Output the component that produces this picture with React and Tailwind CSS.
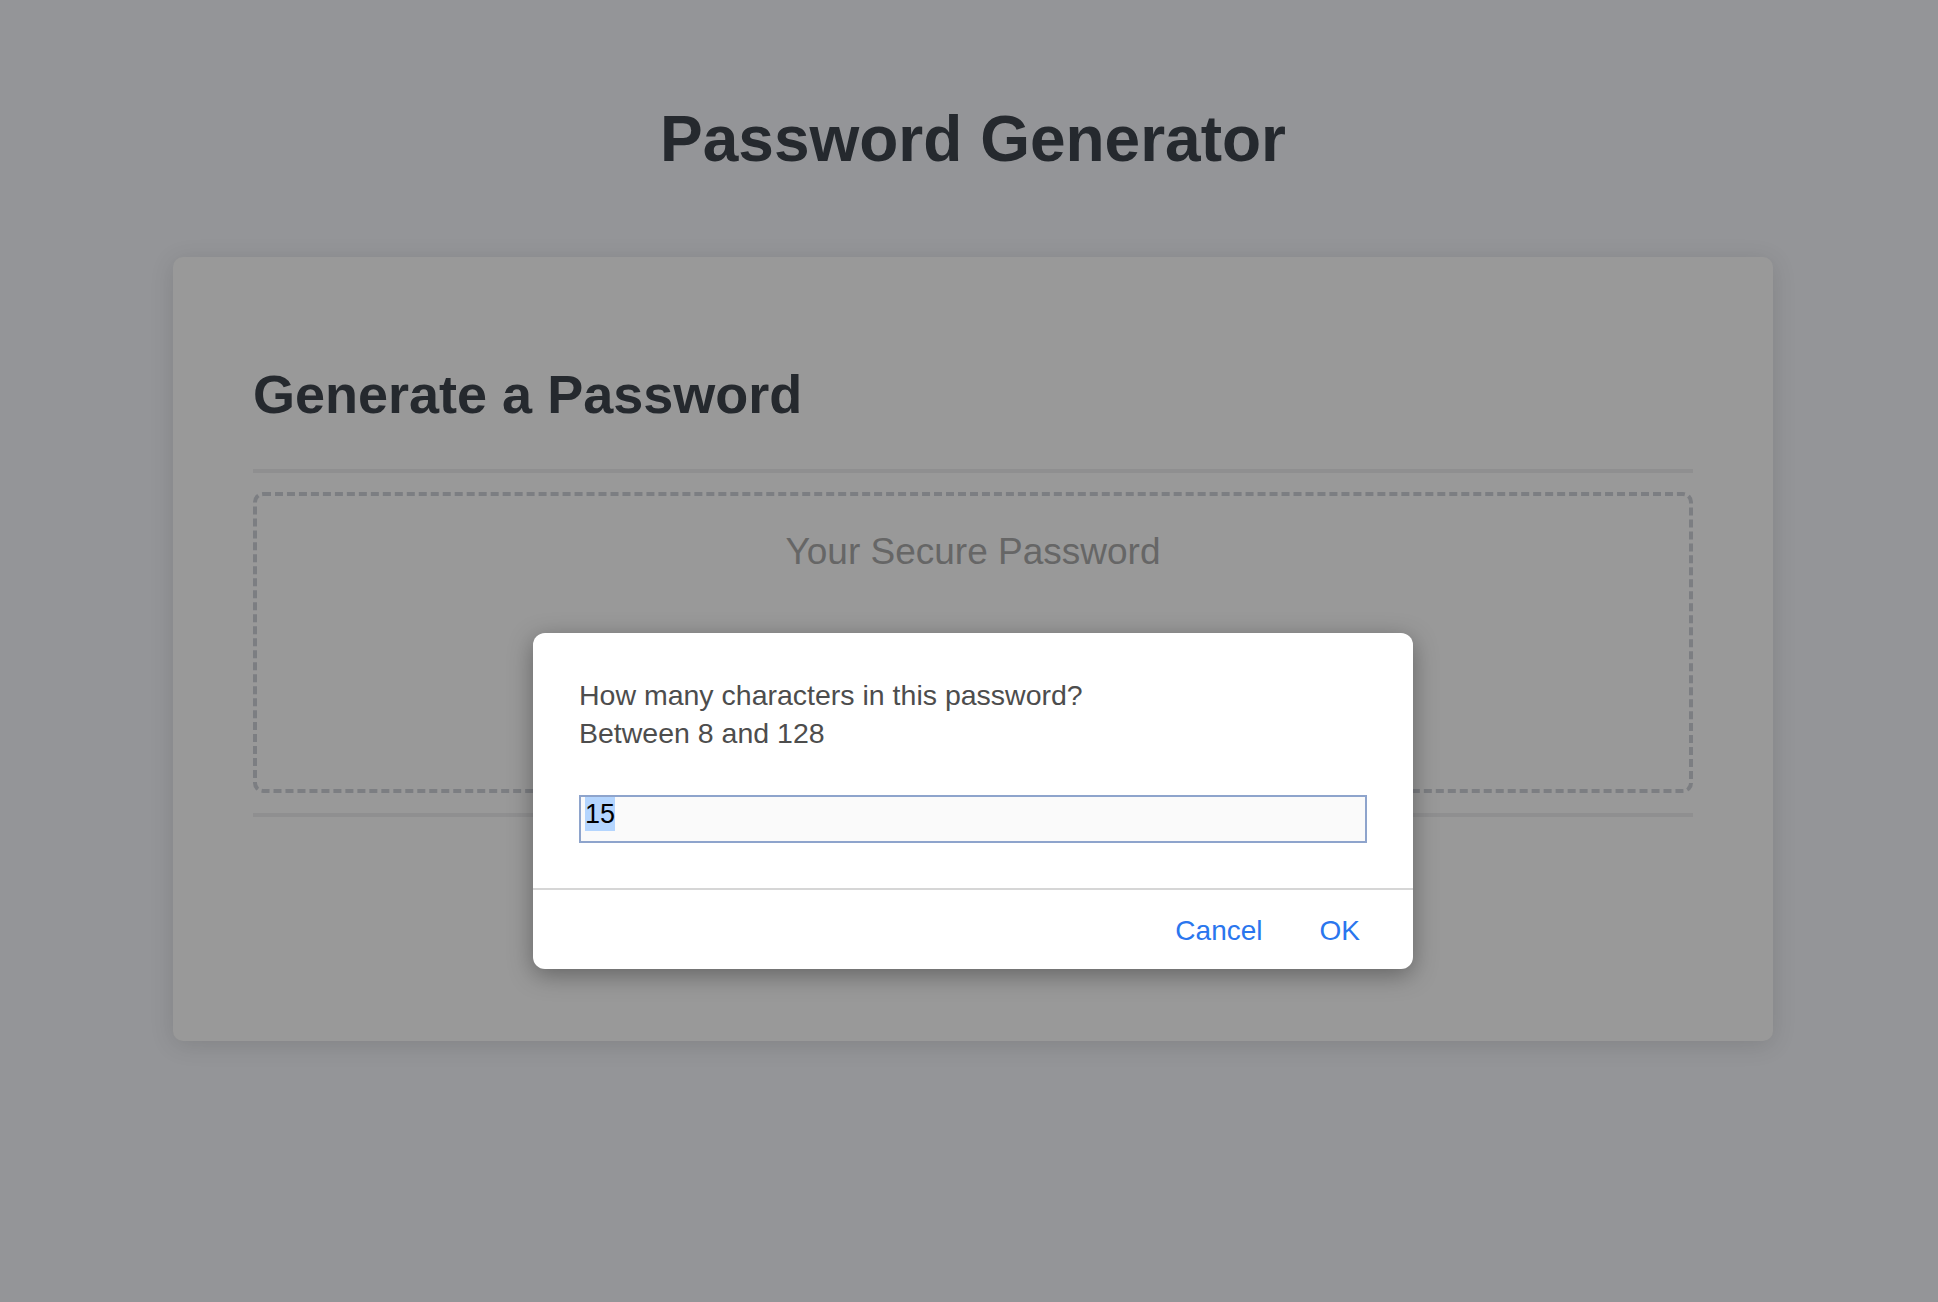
export default function App() {
  return (
    <div className="relative min-h-screen bg-[#949598] font-['Liberation_Sans',Arial,sans-serif]">
      <div className="ml-[173px] w-[1600px] pt-[107px]">
        <h1 className="text-center text-[64px] font-bold leading-[64px] text-[#25292e]">
          Password Generator
        </h1>

        <div className="mt-[86px] rounded-[10px] bg-[#999999] px-[80px] pt-[110px] pb-[224px] shadow-[0_4px_24px_rgba(0,0,0,0.12)]">
          <h2 className="text-[54px] font-bold leading-[54px] text-[#25292e]">
            Generate a Password
          </h2>
          <div className="mt-[48px] h-[4px] bg-[#8f8f90]" />
          <div className="mt-[19px] h-[301px] rounded-[10px] border-4 border-dashed border-[#7c7e82] pt-[37px] text-center text-[37px] leading-[38px] text-[#666666]">
            Your Secure Password
          </div>
          <div className="mt-[20px] h-[4px] bg-[#8f8f90]" />
        </div>
      </div>

      {/* prompt() dialog over the dimmed page */}
      <div className="absolute left-[533px] top-[633px] w-[880px] rounded-[12px] bg-white shadow-[0_6px_24px_rgba(0,0,0,0.35)]">
        <div className="px-[46px] pt-[43px] pb-[45px]">
          <p className="text-[28.5px] leading-[38px] text-[#4d4d4d]">
            How many characters in this password?
            <br />
            Between 8 and 128
          </p>
          <div className="mt-[43px] flex h-[48px] items-start border-2 border-[#8ea4cc] bg-[#fafafa] pl-[4px]">
            <span className="bg-[#b4d5fe] text-[27px] leading-[34px] text-black">15</span>
          </div>
        </div>
        <div className="h-[2px] bg-[#d6d6d6]" />
        <div className="flex justify-end gap-[57px] pr-[53px] pt-[22px] pb-[19px] text-[28px] leading-[38px] text-[#2a76ee]">
          <button type="button">Cancel</button>
          <button type="button">OK</button>
        </div>
      </div>
    </div>
  );
}
